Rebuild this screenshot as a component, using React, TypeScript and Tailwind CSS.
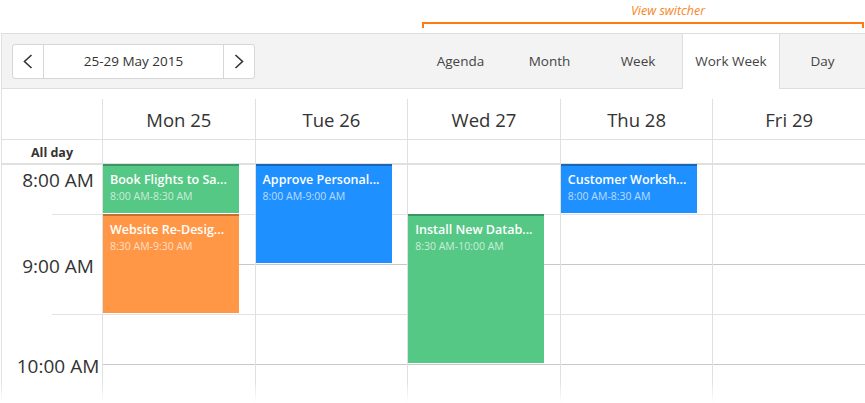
import { ReactNode } from "react";

type CalEvent = {
    title: string
    time: string
    start: number
    slots: number
    color: string
}

const days: { label: string, events: CalEvent[] }[] = [
    {
        label: "Mon 25",
        events: [
            { title: "Book Flights to Sa...", time: "8:00 AM-8:30 AM", start: 0, slots: 1, color: "bg-[#55c885] border-[#3f9466]" },
            { title: "Website Re-Desig...", time: "8:30 AM-9:30 AM", start: 1, slots: 2, color: "bg-[#ff9747] border-[#c56f32]" },
        ]
    },
    {
        label: "Tue 26",
        events: [
            { title: "Approve Personal...", time: "8:00 AM-9:00 AM", start: 0, slots: 2, color: "bg-[#1e90ff] border-[#1a66b5]" },
        ]
    },
    {
        label: "Wed 27",
        events: [
            { title: "Install New Datab...", time: "8:30 AM-10:00 AM", start: 1, slots: 3, color: "bg-[#55c885] border-[#3f9466]" },
        ]
    },
    {
        label: "Thu 28",
        events: [
            { title: "Customer Worksh...", time: "8:00 AM-8:30 AM", start: 0, slots: 1, color: "bg-[#1e90ff] border-[#1a66b5]" },
        ]
    },
    { label: "Fri 29", events: [] },
]

const views = [
    { label: "Agenda", w: "w-[89px]" },
    { label: "Month", w: "w-[89px]" },
    { label: "Week", w: "w-[88px]" },
    { label: "Work Week", w: "w-[98px]", active: true },
    { label: "Day", w: "w-[85px]" },
]

const hours = ["8:00 AM", "9:00 AM", "10:00 AM"]

function Chevron({ dir }: { dir: "left" | "right" }) {
    return (
        <svg width="10" height="15" viewBox="0 0 10 15" fill="none" stroke="#333" strokeWidth="1.6">
            {dir === "left" ? <polyline points="8.5,1 1.5,7.5 8.5,14" /> : <polyline points="1.5,1 8.5,7.5 1.5,14" />}
        </svg>
    )
}

function Slot({ hour, children }: { hour: boolean, children?: ReactNode }) {
    return (
        <div className={`h-[50px] border-b ${hour ? "border-[#c8c8c8]" : "border-[#e3e3e3]"}`}>{children}</div>
    )
}

export default function App() {
    return (
        <div className="relative w-[865px] h-[403px] overflow-hidden bg-white text-[#333] font-['Open_Sans','Noto_Sans',sans-serif]">
            {/* annotation */}
            <div className="h-[33px] ml-[422px] mr-px pt-[3px] flex flex-col">
                <div className="pl-[209px] text-[12.5px] italic leading-[16px] text-[#f7861f]">View switcher</div>
                <div className="mt-[3px] h-[6px] border-t-2 border-x-2 border-[#ff7a0f]" />
            </div>

            <div className="ml-px border-l border-[#e0e0e0]">
                {/* toolbar */}
                <div className="h-[56px] flex border-y border-[#dedede] bg-[#f3f3f3]">
                    <div className="pl-[10px] flex items-center">
                        <div className="flex h-[35px] rounded-[3px] border border-[#d6d6d6] bg-white">
                            <button className="w-[30px] flex items-center justify-center"><Chevron dir="left" /></button>
                            <div className="w-[181px] border-x border-[#d6d6d6] flex items-center justify-center text-[13.5px]">25-29 May 2015</div>
                            <button className="w-[30px] flex items-center justify-center"><Chevron dir="right" /></button>
                        </div>
                    </div>
                    <div className="ml-auto flex">
                        {views.map((v) => (
                            <div
                                key={v.label}
                                className={`${v.w} flex items-center justify-center text-[13.5px] text-[#444] ${v.active ? "bg-white border-x border-[#dedede] -mb-px" : ""}`}
                            >
                                {v.label}
                            </div>
                        ))}
                    </div>
                </div>

                {/* day header */}
                <div className="grid grid-cols-[100px_repeat(5,1fr)] pt-[10px]">
                    <div />
                    {days.map((d) => (
                        <div key={d.label} className="h-[40px] border-l border-[#e0e0e0] flex items-center justify-center pt-[2px] text-[18.5px] text-[#333]">
                            {d.label}
                        </div>
                    ))}
                </div>

                {/* all day row */}
                <div className="grid grid-cols-[100px_repeat(5,1fr)] border-t border-b-2 border-[#e0e0e0]">
                    <div className="h-[23px] flex items-center justify-center pt-[4px] text-[12.5px] font-bold text-[#333]">All day</div>
                    {days.map((d) => (
                        <div key={d.label} className="border-l border-[#e0e0e0]" />
                    ))}
                </div>

                {/* time grid */}
                <div className="grid grid-cols-[100px_repeat(5,1fr)]">
                    <div>
                        {hours.map((h, i) => (
                            <div key={h} className="h-[100px]">
                                <div className="h-0">
                                    <div className={`pl-[12px] text-center text-[19px] leading-[27px] text-[#333] ${i === 0 ? "pt-[2px]" : "-translate-y-[45%]"}`}>{h}</div>
                                </div>
                                <div className="h-[50px] ml-[50px] border-b border-[#e3e3e3]" />
                            </div>
                        ))}
                    </div>
                    {days.map((d) => (
                        <div key={d.label} className="relative border-l border-[#e0e0e0]">
                            <Slot hour={false} />
                            <Slot hour />
                            <Slot hour={false} />
                            <Slot hour />
                            <Slot hour={false} />
                            {d.events.map((ev) => (
                                <div
                                    key={ev.title}
                                    className={`absolute left-0 w-[136px] border-t-2 px-[7px] pt-[5px] text-white ${ev.color}`}
                                    style={{ top: ev.start * 50 - 1, height: ev.slots * 50 - 1 }}
                                >
                                    <div className="text-[12.5px] font-semibold leading-[18px] whitespace-nowrap">{ev.title}</div>
                                    <div className="text-[10.5px] leading-[14px] text-white/70 whitespace-nowrap">{ev.time}</div>
                                </div>
                            ))}
                        </div>
                    ))}
                </div>
            </div>

            {/* bottom fade */}
            <div className="absolute left-0 right-0 bottom-0 h-[22px] bg-gradient-to-b from-white/0 to-white" />
        </div>
    )
}
